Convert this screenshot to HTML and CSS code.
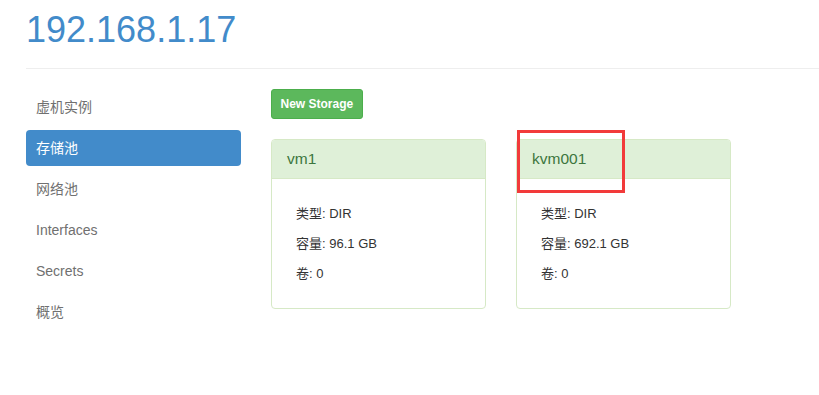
FILE: index.html
```html
<!DOCTYPE html>
<html lang="zh-CN">
<head>
<meta charset="utf-8">
<title>192.168.1.17</title>
<link rel="stylesheet" href="styles.css">
</head>
<body>
<div class="page">
  <h1 class="title">192.168.1.17</h1>
  <hr class="divider">
  <div class="layout">
    <ul class="nav">
      <li class="nav-item">虚机实例</li>
      <li class="nav-item active">存储池</li>
      <li class="nav-item">网络池</li>
      <li class="nav-item">Interfaces</li>
      <li class="nav-item">Secrets</li>
      <li class="nav-item">概览</li>
    </ul>
    <div class="main">
      <button class="btn-new">New Storage</button>
      <div class="cards">
        <div class="card">
          <div class="card-head">vm1</div>
          <div class="card-body">
            <p class="line">类型: DIR</p>
            <p class="line">容量: 96.1 GB</p>
            <p class="line">卷: 0</p>
          </div>
        </div>
        <div class="card">
          <div class="card-head">kvm001</div>
          <div class="card-body">
            <p class="line">类型: DIR</p>
            <p class="line">容量: 692.1 GB</p>
            <p class="line">卷: 0</p>
          </div>
          <div class="highlight"></div>
        </div>
      </div>
    </div>
  </div>
</div>
</body>
</html>
```
FILE: styles.css
```css
* { box-sizing: border-box; }
html, body { margin: 0; padding: 0; background: #fff; }
body {
  font-family: "Liberation Sans", Arial, "Noto Sans CJK SC", sans-serif;
  font-size: 14px;
  color: #333;
}
.page { padding-left: 26px; }
.title {
  margin: 10px 0 0 0;
  font-size: 36px;
  font-weight: 400;
  line-height: 40px;
  color: #428bca;
}
.divider {
  margin: 18px 0 20px 0;
  border: 0;
  border-top: 1px solid #eee;
  height: 0;
}
.layout { display: flex; gap: 30px; align-items: flex-start; }
.nav {
  list-style: none;
  margin: 0;
  padding: 0;
  width: 215px;
  display: flex;
  flex-direction: column;
  gap: 5px;
}
.nav-item {
  height: 36px;
  line-height: 36px;
  padding: 0 10px;
  border-radius: 4px;
  color: #707070;
  font-size: 14px;
}
.nav-item.active { background: #428bca; color: #fff; }
.main { display: flex; flex-direction: column; align-items: flex-start; }
.btn-new {
  height: 30px;
  padding: 0 8.5px;
  font-family: inherit;
  font-size: 12px;
  font-weight: 700;
  color: #fff;
  background: #5cb85c;
  border: 1px solid #4cae4c;
  border-radius: 3px;
}
.cards { display: flex; gap: 30px; margin-top: 20px; }
.card {
  position: relative;
  width: 215px;
  border: 1px solid #d6e9c6;
  border-radius: 4px;
  background: #fff;
}
.card-head {
  height: 39px;
  line-height: 38px;
  padding: 0 15px;
  font-size: 15.5px;
  color: #3c763d;
  background: #dff0d8;
  border-bottom: 1px solid #d6e9c6;
  border-radius: 3px 3px 0 0;
}
.card-body { padding: 20px 24px 19px; }
.line { margin: 0; height: 30px; line-height: 30px; font-size: 13px; color: #333; }
.highlight {
  position: absolute;
  left: 0;
  top: -10px;
  width: 108px;
  height: 63px;
  border: 3px solid #f23a3a;
}
```
